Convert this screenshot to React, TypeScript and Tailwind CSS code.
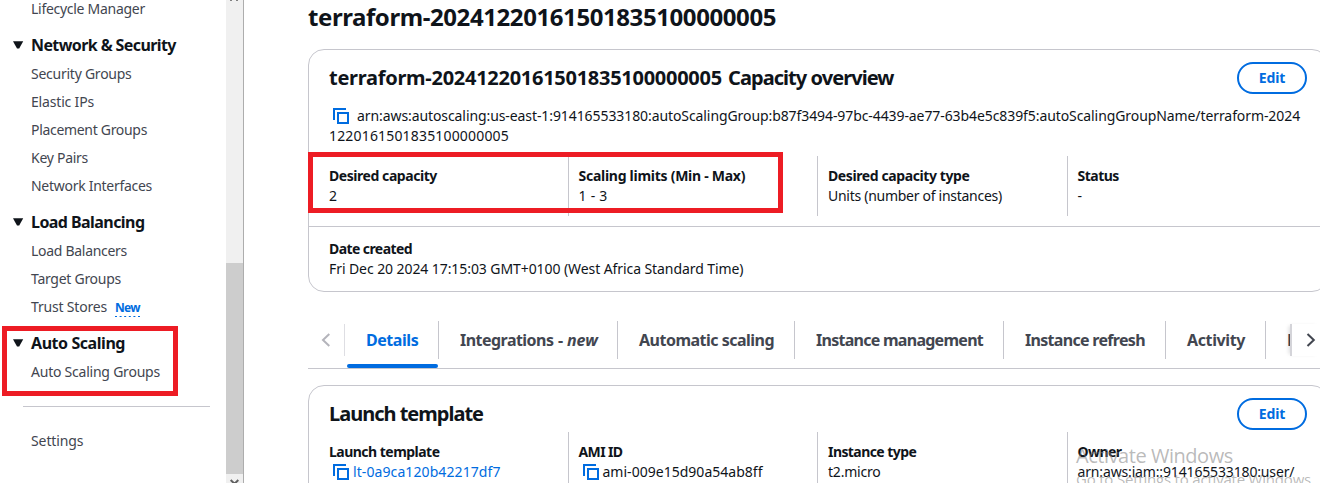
import type { ReactNode } from 'react';

function Caret() {
  return (
    <svg className="h-2 w-[11px] shrink-0" viewBox="0 0 11 8">
      <path d="M0 0.2H10.2L6.2 7.6H4Z" fill="#0f141a" />
    </svg>
  );
}

function CopyIcon() {
  return (
    <svg className="h-4 w-4 shrink-0" viewBox="0 0 16 16" fill="none" stroke="#006ce0" strokeWidth="2" shapeRendering="crispEdges">
      <path d="M1 12V1H13" />
      <rect x="5" y="5" width="10" height="10" />
    </svg>
  );
}

function NavHeading({ children, className }: { children: string; className: string }) {
  return (
    <div className="flex h-5 items-center gap-[7px] pl-[13px]">
      <Caret />
      <span className={`text-base leading-5 font-bold whitespace-nowrap text-[#0f141a] ${className}`}>{children}</span>
    </div>
  );
}

function NavLink({ children, className }: { children: string; className: string }) {
  return <a className={`block h-5 pl-[31px] text-sm leading-5 whitespace-nowrap text-[#424650] ${className}`}>{children}</a>;
}

function EditButton() {
  return (
    <button className="flex h-8 w-[70px] shrink-0 items-center justify-center rounded-full border-2 border-[#006ce0] text-sm leading-5 font-bold tracking-[-0.11px] text-[#006ce0]">
      Edit
    </button>
  );
}

function Field({ label, labelClass, first, children }: { label: string; labelClass: string; first?: boolean; children: ReactNode }) {
  return (
    <div className={first ? 'pt-[10px]' : '-ml-[10.75px] border-l border-[#c6c6cd] pt-[10px] pl-[9.75px]'}>
      <div className={`text-sm leading-5 font-bold whitespace-nowrap ${labelClass}`}>{label}</div>
      <div className="flex h-5 items-center text-sm leading-5 whitespace-nowrap">{children}</div>
    </div>
  );
}

function Tab({ children, className }: { children: ReactNode; className: string }) {
  return (
    <div className={`h-[38px] shrink-0 border-r border-[#c6c6cd] pt-[9px] text-base leading-5 font-bold whitespace-nowrap ${className}`}>
      {children}
    </div>
  );
}

function Sidebar() {
  return (
    <nav className="relative h-[483px] w-[226px] shrink-0">
      <div className="-mt-px">
        <NavLink className="tracking-[-0.28px]">Lifecycle Manager</NavLink>
      </div>
      <div className="mt-4">
        <NavHeading className="tracking-[-0.6px]">Network &amp; Security</NavHeading>
      </div>
      <div className="mt-[9px] flex flex-col gap-2">
        <NavLink className="tracking-[-0.25px]">Security Groups</NavLink>
        <NavLink className="tracking-[-0.17px]">Elastic IPs</NavLink>
        <NavLink className="tracking-[-0.31px]">Placement Groups</NavLink>
        <NavLink className="tracking-[-0.28px]">Key Pairs</NavLink>
        <NavLink className="tracking-[-0.28px]">Network Interfaces</NavLink>
      </div>
      <div className="mt-4">
        <NavHeading className="tracking-[-0.56px]">Load Balancing</NavHeading>
      </div>
      <div className="mt-[9px] flex flex-col gap-2">
        <NavLink className="tracking-[-0.29px]">Load Balancers</NavLink>
        <NavLink className="tracking-[-0.27px]">Target Groups</NavLink>
        <div className="flex h-5 gap-2">
          <NavLink className="tracking-[-0.19px]">Trust Stores</NavLink>
          <span className="relative h-5 w-[25px] text-xs leading-[22px] font-bold tracking-[-0.65px] whitespace-nowrap text-[#006ce0]">
            New
            <svg className="absolute top-[19px] left-0 h-px w-[25px]" viewBox="0 0 25 1">
              <path d="M0 .5H25" stroke="#006ce0" strokeDasharray="2 2.6" />
            </svg>
          </span>
        </div>
      </div>
      <div className="mt-4">
        <NavHeading className="tracking-[-0.44px]">Auto Scaling</NavHeading>
      </div>
      <div className="mt-[9px]">
        <NavLink className="tracking-[-0.23px]">Auto Scaling Groups</NavLink>
      </div>
      <hr className="mt-6 ml-[23px] w-[187px] border-[#c6c6cd]" />
      <div className="mt-6">
        <NavLink className="tracking-[-0.1px]">Settings</NavLink>
      </div>
      <div className="absolute top-[326px] left-0.5 h-[70px] w-[176px] border-5 border-[#ed1c24]" />
    </nav>
  );
}

function Scrollbar() {
  return (
    <div className="flex h-[483px] w-[18px] shrink-0 flex-col border-r border-[#adadad] bg-[#f0f0f0]">
      <svg className="h-[263px] w-[17px]" viewBox="0 0 17 263">
        <path d="M4 0H6V1H4ZM10 0H12V1H10Z" fill="#808080" />
      </svg>
      <div className="h-[211px] bg-[#cdcdcd]" />
      <svg className="h-[9px] w-[17px]" viewBox="0 0 17 9" fill="none">
        <path d="M4.7 6L8.5 9.8L12.3 6" stroke="#606060" strokeWidth="2" />
      </svg>
    </div>
  );
}

function CapacityCard() {
  return (
    <section className="relative mt-[17px] h-[243px] w-[1020px] rounded-2xl border border-[#c6c6cd]">
      <div className="mt-3 flex h-8 items-center justify-between px-5">
        <h2 className="flex text-xl leading-6 font-bold whitespace-pre">
          <span className="w-[399px] tracking-[-0.27px]">terraform-20241220161501835100000005</span>
          <span className="tracking-[-0.94px]">Capacity overview</span>
        </h2>
        <EditButton />
      </div>
      <div className="mt-3 px-5 text-sm leading-5 whitespace-nowrap">
        <div className="flex items-center gap-2 pl-1">
          <CopyIcon />
          <span className="tracking-[-0.087px]">
            arn:aws:autoscaling:us-east-1:914165533180:autoScalingGroup:b87f3494-97bc-4439-ae77-63b4e5c839f5:autoScalingGroupName/terraform-2024
          </span>
        </div>
        <div className="tracking-[0.17px]">1220161501835100000005</div>
      </div>
      <div className="mt-[10px] grid h-[60px] grid-cols-4 gap-x-5 px-5">
        <Field first label="Desired capacity" labelClass="tracking-[-0.44px]">2</Field>
        <Field label="Scaling limits (Min - Max)" labelClass="tracking-[-0.27px]">
          <span className="tracking-[0.24px]">1 - 3</span>
        </Field>
        <Field label="Desired capacity type" labelClass="tracking-[-0.4px]">
          <span className="tracking-[-0.28px]">Units (number of instances)</span>
        </Field>
        <Field label="Status" labelClass="tracking-[-0.5px]">-</Field>
      </div>
      <div className="mt-[10px] border-t border-[#c6c6cd] px-5 pt-3 text-sm leading-5">
        <div className="font-bold tracking-[-0.58px]">Date created</div>
        <div className="tracking-[-0.08px]">Fri Dec 20 2024 17:15:03 GMT+0100 (West Africa Standard Time)</div>
      </div>
      <div className="absolute top-[102px] -left-px h-[61px] w-[475px] border-5 border-[#ed1c24]" />
    </section>
  );
}

function Tabs() {
  return (
    <div className="mt-[29px] flex h-12 w-[1020px] border-b border-[#c6c6cd] text-[#424650]">
      <div className="mt-[3px] flex h-8 w-[37px] shrink-0 items-center border-r border-[#dedee3] pl-3">
        <svg className="h-4 w-3" viewBox="0 0 12 16" fill="none" stroke="#b4b4bb" strokeWidth="2">
          <path d="M9.3 2L3 8L9.3 14" />
        </svg>
      </div>
      <div className="flex w-[945px] shrink-0 overflow-hidden">
        <div className="relative ml-0.5 h-[47px]">
          <Tab className="w-[92px] pl-[19px] tracking-[-0.45px] text-[#006ce0]">Details</Tab>
          <div className="absolute top-[43px] left-0 h-1 w-[91px] rounded-full bg-[#006ce0]" />
        </div>
        <Tab className="w-[179px] pl-[21px] tracking-[-0.53px] [word-spacing:0.8px]">
          Integrations - <i className="tracking-normal">new</i>
        </Tab>
        <Tab className="w-[177px] pl-[21px] tracking-[-0.51px]">Automatic scaling</Tab>
        <Tab className="w-[209px] pl-[21px] tracking-[-0.73px]">Instance management</Tab>
        <Tab className="w-[162px] pl-[21px] tracking-[-0.69px]">Instance refresh</Tab>
        <Tab className="w-[100px] pl-[21px] tracking-[-0.38px]">Activity</Tab>
        <Tab className="w-[120px] pl-[21px]">Monitoring</Tab>
      </div>
      <div className="mt-[3px] flex h-8 w-[30px] shrink-0 items-center border-l-2 border-[#d4d4d9] pl-[13px] shadow-[-3px_0_4px_-2px_rgba(0,7,22,0.15)]">
        <svg className="h-4 w-3" viewBox="0 0 12 16" fill="none" stroke="#424650" strokeWidth="2">
          <path d="M2.5 2L8.8 8L2.5 14" />
        </svg>
      </div>
    </div>
  );
}

function LaunchTemplateCard() {
  return (
    <section className="mt-4 h-[200px] w-[1020px] rounded-2xl border border-[#c6c6cd]">
      <div className="mt-3 flex h-8 items-center justify-between px-5">
        <h2 className="text-xl leading-6 font-bold tracking-[-1px]">Launch template</h2>
        <EditButton />
      </div>
      <div className="mt-0.5 grid h-[60px] grid-cols-4 gap-x-5 px-5">
        <Field first label="Launch template" labelClass="tracking-[-0.52px]">
          <span className="flex items-center gap-1 pl-1 text-[#006ce0]">
            <CopyIcon />
            <span className="tracking-[0.09px]">lt-0a9ca120b42217df7</span>
          </span>
        </Field>
        <Field label="AMI ID" labelClass="tracking-[-0.61px]">
          <span className="flex items-center gap-1 pl-1">
            <CopyIcon />
            <span className="tracking-[0.02px]">ami-009e15d90a54ab8ff</span>
          </span>
        </Field>
        <Field label="Instance type" labelClass="tracking-[-0.57px]">
          <span className="tracking-[-0.21px]">t2.micro</span>
        </Field>
        <Field label="Owner" labelClass="tracking-[-0.55px]">
          <span className="tracking-[-0.15px]">arn:aws:iam::914165533180:user/</span>
        </Field>
      </div>
    </section>
  );
}

export default function App() {
  return (
    <div className="relative flex h-[483px] w-[1320px] overflow-hidden bg-white font-['Noto_Sans',sans-serif] text-[#0f141a]">
      <Sidebar />
      <Scrollbar />
      <main className="h-[483px] w-[1076px] shrink-0 overflow-hidden pl-16">
        <h1 className="mt-0.5 text-2xl leading-[30px] font-bold tracking-[-0.42px] whitespace-nowrap">terraform-20241220161501835100000005</h1>
        <CapacityCard />
        <Tabs />
        <LaunchTemplateCard />
      </main>
      <div className="pointer-events-none absolute top-[442px] left-[1076px] font-['Open_Sans',sans-serif] whitespace-nowrap text-[#808080]/55">
        <div className="text-xl leading-7 tracking-[-0.46px]">Activate Windows</div>
        <div className="-mt-px text-[15px] leading-5 tracking-[-0.2px]">Go to Settings to activate Windows.</div>
      </div>
    </div>
  );
}
